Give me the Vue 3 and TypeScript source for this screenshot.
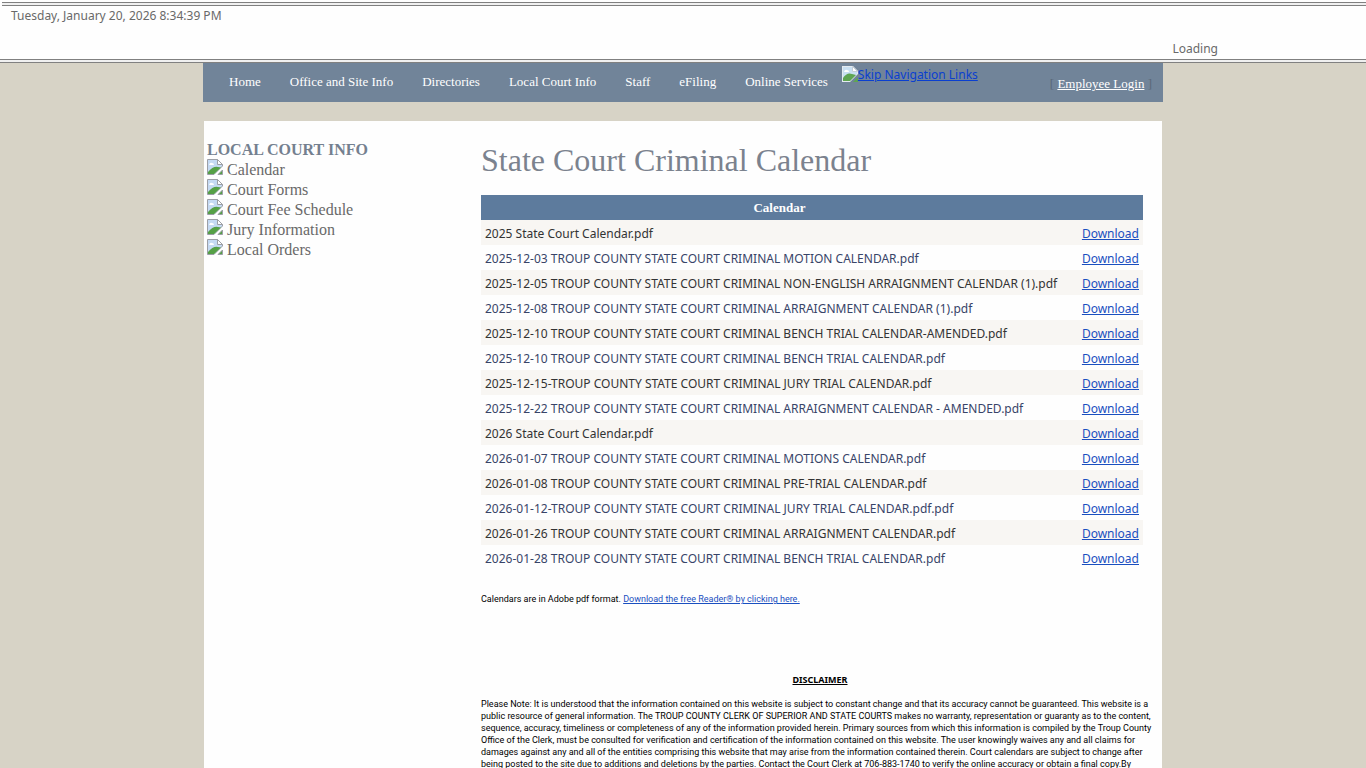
<script setup lang="ts">
const navItems: string[] = [
  'Home',
  'Office and Site Info',
  'Directories',
  'Local Court Info',
  'Staff',
  'eFiling',
  'Online Services',
]

const sideLinks: string[] = [
  'Calendar',
  'Court Forms',
  'Court Fee Schedule',
  'Jury Information',
  'Local Orders',
]

const files: string[] = [
  '2025 State Court Calendar.pdf',
  '2025-12-03 TROUP COUNTY STATE COURT CRIMINAL MOTION CALENDAR.pdf',
  '2025-12-05 TROUP COUNTY STATE COURT CRIMINAL NON-ENGLISH ARRAIGNMENT CALENDAR (1).pdf',
  '2025-12-08 TROUP COUNTY STATE COURT CRIMINAL ARRAIGNMENT CALENDAR (1).pdf',
  '2025-12-10 TROUP COUNTY STATE COURT CRIMINAL BENCH TRIAL CALENDAR-AMENDED.pdf',
  '2025-12-10 TROUP COUNTY STATE COURT CRIMINAL BENCH TRIAL CALENDAR.pdf',
  '2025-12-15-TROUP COUNTY STATE COURT CRIMINAL JURY TRIAL CALENDAR.pdf',
  '2025-12-22 TROUP COUNTY STATE COURT CRIMINAL ARRAIGNMENT CALENDAR - AMENDED.pdf',
  '2026 State Court Calendar.pdf',
  '2026-01-07 TROUP COUNTY STATE COURT CRIMINAL MOTIONS CALENDAR.pdf',
  '2026-01-08 TROUP COUNTY STATE COURT CRIMINAL PRE-TRIAL CALENDAR.pdf',
  '2026-01-12-TROUP COUNTY STATE COURT CRIMINAL JURY TRIAL CALENDAR.pdf.pdf',
  '2026-01-26 TROUP COUNTY STATE COURT CRIMINAL ARRAIGNMENT CALENDAR.pdf',
  '2026-01-28 TROUP COUNTY STATE COURT CRIMINAL BENCH TRIAL CALENDAR.pdf',
]

const disclaimer: string[] = [
  'Please Note: It is understood that the information contained on this website is subject to constant change and that its accuracy cannot be guaranteed. This website is a',
  'public resource of general information. The TROUP COUNTY CLERK OF SUPERIOR AND STATE COURTS makes no warranty, representation or guaranty as to the content,',
  'sequence, accuracy, timeliness or completeness of any of the information provided herein. Primary sources from which this information is compiled by the Troup County',
  'Office of the Clerk, must be consulted for verification and certification of the information contained on this website. The user knowingly waives any and all claims for',
  'damages against any and all of the entities comprising this website that may arise from the information contained therein. Court calendars are subject to change after',
  'being posted to the site due to additions and deletions by the parties. Contact the Court Clerk at 706-883-1740 to verify the online accuracy or obtain a final copy.By',
]
</script>

<template>
  <div class="page">
    <header class="status">
      <div class="rule top"></div>
      <div class="status-body">
        <time class="clock">Tuesday, January 20, 2026 8:34:39 PM</time>
        <span class="loading">Loading</span>
      </div>
      <div class="rule bottom"></div>
    </header>

    <div class="wrap">
      <nav class="bar">
        <ul class="menu">
          <li v-for="item in navItems" :key="item">
            <a href="#">{{ item }}</a>
          </li>
        </ul>
        <a class="skip" href="#content">
          <svg class="broken" viewBox="0 0 16 16" aria-hidden="true">
            <path d="M0 0H11L16 5V8L8 16H0Z" fill="#e4ebf0" />
            <path d="M1 1H10V6H15V8L9 14H1Z" fill="#c9e0f2" />
            <path d="M2 6Q3 3 5 4Q7 4 7 6Z" fill="#fff" />
            <path d="M1 15V12Q5 6 10 8L14 9L8 15Z" fill="#5fa552" />
            <path d="M10.500 .5V5.500H15.500Z" fill="#fff" stroke="#c5ced6" />
            <path d="M11 16L16 11V16Z" fill="#5fa552" />
          </svg>Skip Navigation Links</a>
        <div class="login">[ <a href="#">Employee Login</a> ]</div>
      </nav>

      <div class="panel">
        <aside class="side">
          <h2>LOCAL COURT INFO</h2>
          <ul>
            <li v-for="link in sideLinks" :key="link">
              <a href="#">
                <svg class="broken" viewBox="0 0 16 16" aria-hidden="true">
                  <path d="M.5 15.5V.5H10.5L15.5 5.5V7L7 15.5Z" fill="#c5daf3" stroke="#9c9fa6" />
                  <path d="M2 6Q3 3 5 4Q7 4 7 6Z" fill="#fff" />
                  <path d="M1 15V13Q6 7 11 8L14 8.500L7 15Z" fill="#55a046" />
                  <path d="M10.500 .5V5.500H15.500Z" fill="#fff" stroke="#9c9fa6" />
                  <path d="M11 15.500H15.500V11Z" fill="#55a046" stroke="#9c9fa6" />
                </svg>
                {{ link }}
              </a>
            </li>
          </ul>
        </aside>

        <main id="content" class="content">
          <h1>State Court Criminal Calendar</h1>
          <table class="files">
            <thead>
              <tr>
                <th>Calendar</th>
                <th></th>
              </tr>
            </thead>
            <tbody>
              <tr v-for="file in files" :key="file">
                <td>{{ file }}</td>
                <td class="get"><a href="#">Download</a></td>
              </tr>
            </tbody>
          </table>
          <p class="note">
            Calendars are in Adobe pdf format.
            <a href="#">Download the free Reader® by clicking here.</a>
          </p>
          <h3>DISCLAIMER</h3>
          <p class="legal">
            <template v-for="line in disclaimer" :key="line">{{ line }}<br /></template>
          </p>
        </main>
      </div>
    </div>
  </div>
</template>

<style>
html,
body {
  margin: 0;
  height: 100%;
  overflow: hidden;
  background: #d7d3c6;
}
</style>

<style scoped>
.page {
  font-family: "Noto Sans", "Open Sans", sans-serif;
  font-size: 12px;
  color: #696969;
  height: 100vh;
  overflow: hidden;
}
.status {
  padding-top: 2px;
  background: #fefefe;
}
.rule {
  height: 2px;
  border: solid #808080;
  border-width: 1px 0;
  background: #f0f0f0;
}
.rule.top {
  margin-left: 2px;
}
.status-body {
  display: flex;
  justify-content: space-between;
  height: 53px;
  padding: 0 148px 0 11px;
  line-height: 20px;
}
.loading {
  align-self: flex-end;
}
.wrap {
  width: 960px;
  margin: 0 auto;
}
.bar {
  display: flex;
  height: 39px;
  background: #718499;
  font-family: "Liberation Serif", serif;
  font-size: 13px;
}
.menu {
  display: flex;
  margin: 0;
  padding: 0 0 0 11px;
  list-style: none;
}
.menu a {
  display: block;
  padding: 0 14px 0 15px;
  line-height: 38px;
  color: #fff;
  text-decoration: none;
}
.skip {
  font-family: "Noto Sans", "Open Sans", sans-serif;
  font-size: 12px;
  line-height: 24px;
  color: #0a3fd0;
}
.broken {
  width: 16px;
  height: 16px;
}
.skip .broken {
  vertical-align: -3px;
}
.login {
  margin-left: auto;
  padding-right: 11px;
  line-height: 42px;
  color: #5a6878;
}
.login a {
  color: #fff;
}
.panel {
  display: flex;
  margin: 19px 1px 0;
  min-height: 700px;
  background: #fefefe;
}
.side {
  width: 277px;
  padding: 19px 0 0 3px;
  box-sizing: border-box;
  font-family: "Liberation Serif", serif;
  font-size: 16px;
  line-height: 20px;
}
.side h2 {
  margin: 0;
  font-size: 16px;
  line-height: 19px;
  color: #74808f;
}
.side ul {
  margin: 0;
  padding: 0;
  list-style: none;
}
.side li {
  height: 20px;
}
.side a {
  color: #696969;
  text-decoration: none;
}
.content {
  flex: 1;
  min-width: 0;
  padding: 18px 3px 0 0;
}
h1 {
  margin: 0;
  font: 400 32px/42px "Liberation Serif", serif;
  color: #7b828e;
}
.files {
  width: calc(100% - 16px);
  margin-top: 14px;
  border-collapse: collapse;
  line-height: 17px;
  color: #333;
}
.files th {
  padding: 4px;
  background: #5d7b9d;
  color: #fff;
  font-family: "Liberation Serif", serif;
  font-size: 13px;
}
.files td {
  padding: 5px 4px 3px;
  white-space: nowrap;
}
.files tbody tr:nth-child(odd) {
  background: #f8f6f3;
}
.files tbody tr:nth-child(even) {
  color: #384468;
}
.files .get {
  width: 57px;
}
.files a,
.note a {
  color: #1a4fc0;
}
.note {
  margin: 23px 0 0;
  font-family: Roboto, sans-serif;
  font-size: 9px;
  line-height: 12px;
  color: #000;
}
h3 {
  margin: 69px 0 12px;
  text-align: center;
  font-size: 9px;
  line-height: 12px;
  color: #000;
  text-decoration: underline;
}
.legal {
  margin: 0;
  font-family: Roboto, sans-serif;
  font-size: 9px;
  line-height: 12px;
  white-space: nowrap;
  color: #000;
}
</style>
